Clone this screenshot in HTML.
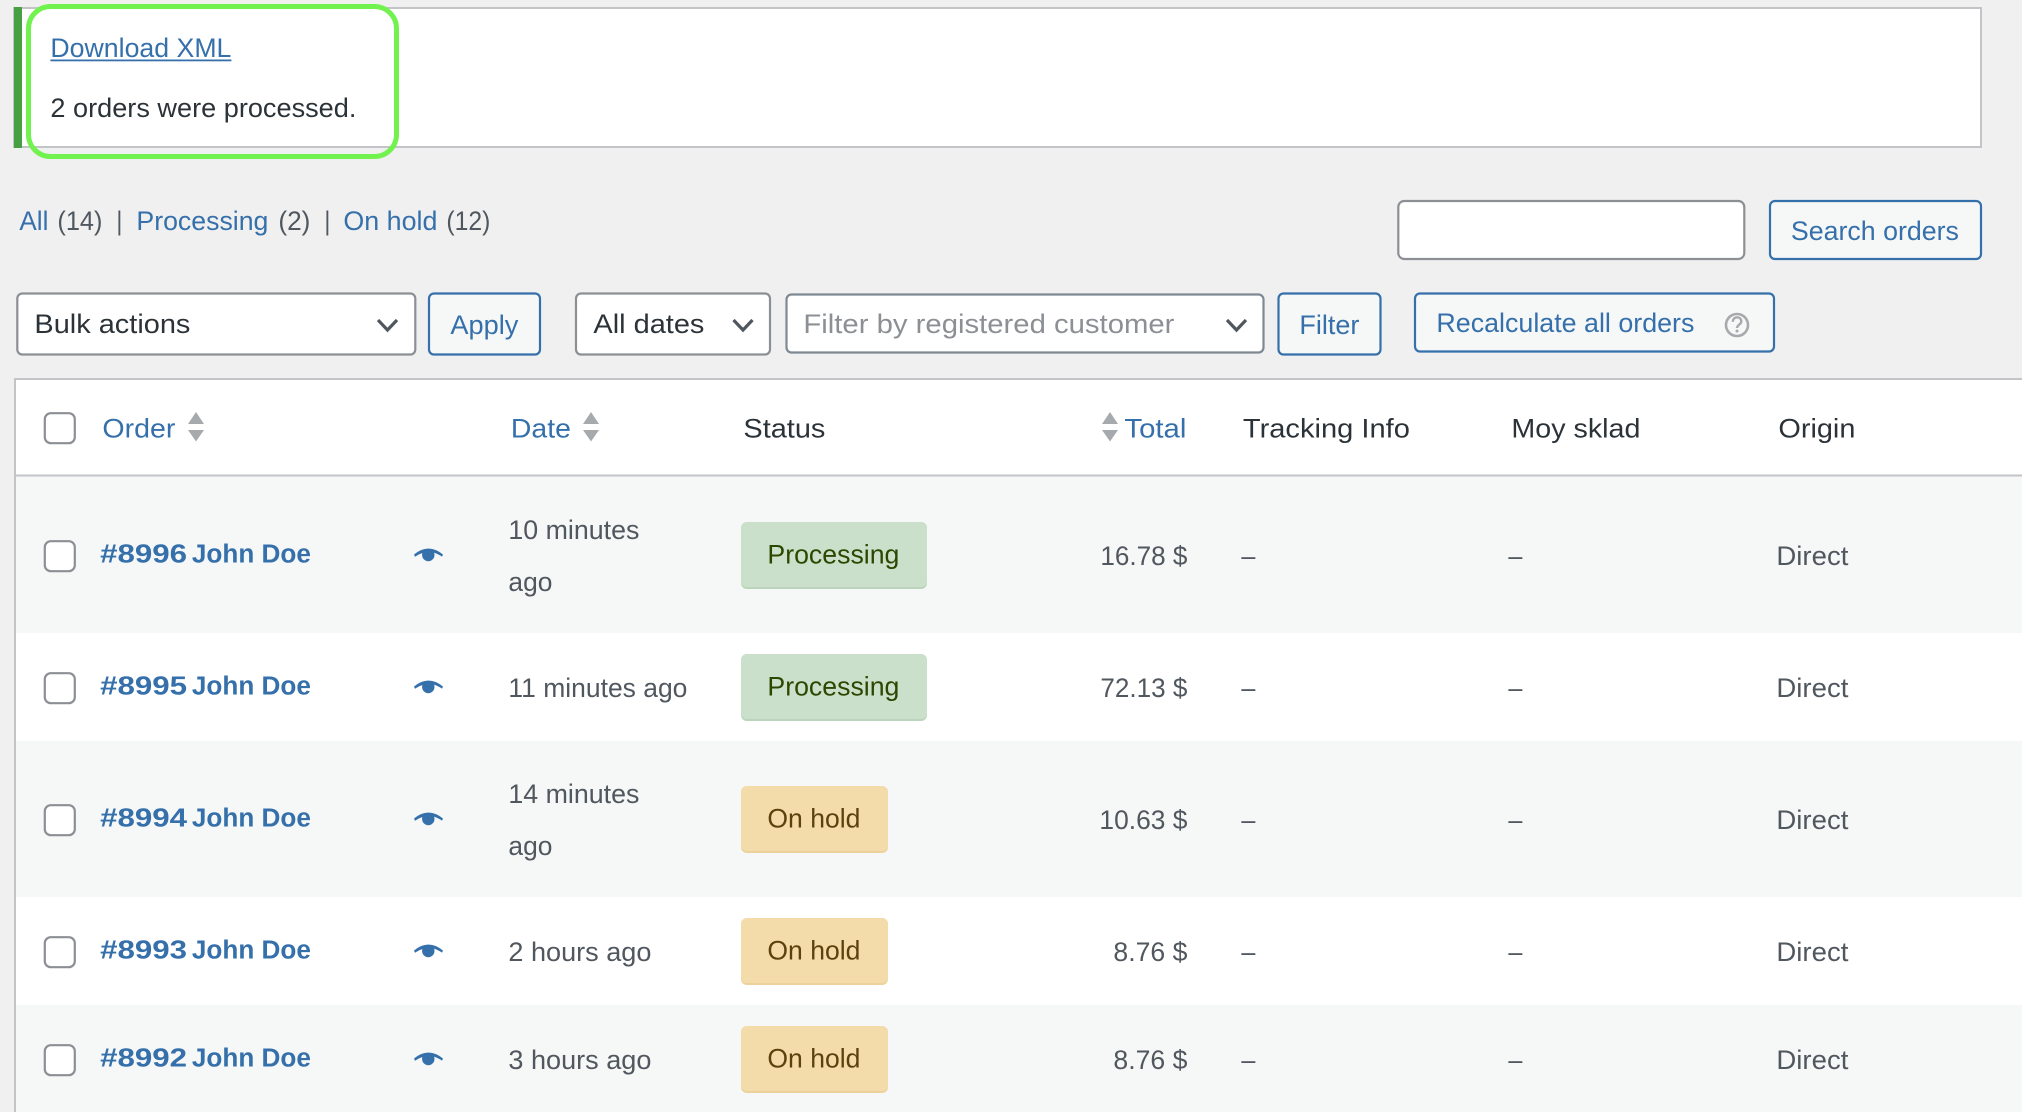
<!DOCTYPE html>
<html lang="en">
<head>
<meta charset="utf-8">
<title>Orders</title>
<style>
html,body{margin:0;padding:0;background:#f0f0f1;width:2022px;height:1112px;overflow:hidden}
svg{display:block;position:absolute;left:0;top:0}
text{font-family:"Liberation Sans",sans-serif;font-size:26.6px;fill:#3c434a;transform:translateX(-.6px)}
.l{fill:#3570ab}
.d{fill:#2c3338}
.g{fill:#50575e;transform:translate(-.6px,.8px)}
.b{fill:#3570ab;font-weight:bold;font-size:25.5px}
.p{fill:#2c4700}
.h{fill:#5b410c}
.s{fill:#a7aaad}
.box{fill:#fff;stroke:#8c8f94;stroke-width:2.2}
.btn{fill:#f6f7f7;stroke:#3570ab;stroke-width:2.2}
.chev{fill:none;stroke:#50575e;stroke-width:3.2}
</style>
</head>
<body>
<svg width="2022" height="1112" viewBox="0 0 2022 1112" xmlns="http://www.w3.org/2000/svg">
<defs>
<g id="eye"><path d="M414 554.6C423 546.6 434 546.6 443 554.6L442 556.6C437 553.6 434 552.6 433 552.4L422 553.2C420 553.8 418 554.8 415 556.8Z" fill="#3570ab"/><circle cx="428.3" cy="555" r="6.2" fill="#3570ab"/></g>
<g id="cb"><rect x="44.800" y="541.200" width="30" height="30" rx="6" fill="#fff" stroke="#8c8f94" stroke-width="2.2"/></g>
<g id="badgeP"><rect x="741" y="522" width="186" height="67" rx="6" fill="#bbd4bb"/><rect x="741" y="522" width="186" height="65" rx="6" fill="#cbe0cb"/></g>
<g id="badgeH"><rect x="741" y="522" width="147" height="67" rx="6" fill="#ecd29a"/><rect x="741" y="522" width="147" height="65" rx="6" fill="#f4dcaa"/></g>
<g id="up"><path d="M0 12L8 0L16 12Z" fill="#a7aaad"/><path d="M0 18H16L8 29.500Z" fill="#a7aaad"/></g>
</defs>

<!-- Notice -->
<rect x="14" y="8" width="1967" height="139" fill="#fff" stroke="#c3c4c7" stroke-width="2"/>
<rect x="14" y="7" width="8" height="141" fill="#46a03f"/>
<a><text class="l" x="51" y="57" textLength="181" lengthAdjust="spacingAndGlyphs">Download XML</text></a>
<rect x="50.400" y="59.500" width="181" height="1.800" fill="#3570ab"/>
<text class="d" x="51" y="117" textLength="306" lengthAdjust="spacingAndGlyphs">2 orders were processed.</text>
<rect x="28.500" y="6.500" width="368" height="150" rx="22" fill="none" stroke="#72f24f" stroke-width="5"/>

<!-- Status tabs -->
<text class="l" x="20" y="230" textLength="29" lengthAdjust="spacingAndGlyphs">All</text>
<text class="g" x="58" y="229.200" textLength="45" lengthAdjust="spacingAndGlyphs">(14)</text>
<text class="g" x="117" y="229.200" textLength="6" lengthAdjust="spacingAndGlyphs">|</text>
<text class="l" x="137" y="230" textLength="132" lengthAdjust="spacingAndGlyphs">Processing</text>
<text class="g" x="279" y="229.200" textLength="32" lengthAdjust="spacingAndGlyphs">(2)</text>
<text class="g" x="325" y="229.200" textLength="6" lengthAdjust="spacingAndGlyphs">|</text>
<text class="l" x="344" y="230" textLength="94" lengthAdjust="spacingAndGlyphs">On hold</text>
<text class="g" x="447" y="229.200" textLength="44" lengthAdjust="spacingAndGlyphs">(12)</text>

<!-- Search -->
<rect class="box" x="1398.300" y="201" width="346" height="58" rx="6"/>
<rect class="btn" x="1770" y="201" width="211" height="58" rx="5"/>
<text class="l" x="1791.500" y="240" textLength="168" lengthAdjust="spacingAndGlyphs">Search orders</text>

<!-- Bulk bar -->
<rect class="box" x="17.300" y="293.500" width="398" height="61" rx="5"/>
<text class="d" x="35" y="333" textLength="156" lengthAdjust="spacingAndGlyphs">Bulk actions</text>
<path class="chev" d="M378 320L387.500 330L397 320"/>
<rect class="btn" x="429" y="293.500" width="111" height="61" rx="5"/>
<text class="l" x="451" y="334" textLength="68" lengthAdjust="spacingAndGlyphs">Apply</text>

<rect class="box" x="576" y="293.500" width="194" height="61" rx="5"/>
<text class="d" x="594" y="333" textLength="111" lengthAdjust="spacingAndGlyphs">All dates</text>
<path class="chev" d="M733.500 320L743 330L752.500 320"/>

<rect x="786.500" y="294.500" width="477" height="58" rx="5" fill="#fff" stroke="#7e8993" stroke-width="2.200"/>
<text style="fill:#8c8f94" x="804" y="333" textLength="371" lengthAdjust="spacingAndGlyphs">Filter by registered customer</text>
<path class="chev" d="M1227 320L1236.500 330L1246 320"/>

<rect class="btn" x="1278.500" y="293.500" width="102" height="61" rx="5"/>
<text class="l" x="1300" y="334" textLength="60" lengthAdjust="spacingAndGlyphs">Filter</text>

<rect class="btn" x="1415" y="293.500" width="359" height="58" rx="5"/>
<text class="l" x="1437" y="332" textLength="258" lengthAdjust="spacingAndGlyphs">Recalculate all orders</text>
<circle cx="1737" cy="325" r="11" fill="none" stroke="#a7aaad" stroke-width="2.600"/>
<path d="M1732.800 321.800C1733 315.800 1741.400 316 1741.300 321.400C1741.300 324.600 1737.100 324.600 1737.100 328" fill="none" stroke="#a7aaad" stroke-width="2.400"/>
<circle cx="1737" cy="331" r="1.500" fill="#a7aaad"/>

<!-- Table -->
<rect x="15" y="379" width="2010" height="740" fill="#fff" stroke="#c3c4c7" stroke-width="2"/>
<rect x="16" y="474.500" width="2006" height="2" fill="#c3c4c7"/>
<rect x="16" y="476.500" width="2006" height="156.500" fill="#f6f7f7"/>
<rect x="16" y="741" width="2006" height="156" fill="#f6f7f7"/>
<rect x="16" y="1005" width="2006" height="107" fill="#f6f7f7"/>

<!-- Header -->
<use href="#cb" y="-128"/>
<text class="l" x="103" y="437.500" textLength="73" lengthAdjust="spacingAndGlyphs">Order</text>
<use href="#up" x="188" y="412"/>
<text class="l" x="511.500" y="437.500" textLength="60" lengthAdjust="spacingAndGlyphs">Date</text>
<use href="#up" x="583" y="412"/>
<text class="d" x="744" y="437.500" textLength="82" lengthAdjust="spacingAndGlyphs">Status</text>
<use href="#up" x="1102" y="412"/>
<text class="l" x="1125" y="437.500" textLength="62" lengthAdjust="spacingAndGlyphs">Total</text>
<text class="d" x="1243.500" y="437.500" textLength="167" lengthAdjust="spacingAndGlyphs">Tracking Info</text>
<text class="d" x="1512" y="437.500" textLength="129" lengthAdjust="spacingAndGlyphs">Moy sklad</text>
<text class="d" x="1779" y="437.500" textLength="77" lengthAdjust="spacingAndGlyphs">Origin</text>

<!-- Row 1 -->
<use href="#cb"/>
<text class="b" x="100.700" y="562.700" textLength="87" lengthAdjust="spacingAndGlyphs">#8996</text>
<text class="b" x="192.500" y="562.700" textLength="119" lengthAdjust="spacingAndGlyphs">John Doe</text>
<use href="#eye"/>
<text class="g" x="509" y="538" textLength="131" lengthAdjust="spacingAndGlyphs">10 minutes</text>
<text class="g" x="509" y="590" textLength="44" lengthAdjust="spacingAndGlyphs">ago</text>
<use href="#badgeP"/>
<text class="p" x="768" y="563.500" textLength="132" lengthAdjust="spacingAndGlyphs">Processing</text>
<text class="g" x="1101" y="564" textLength="87" lengthAdjust="spacingAndGlyphs">16.78 $</text>
<text class="g" x="1242" y="564" textLength="14" lengthAdjust="spacingAndGlyphs">–</text>
<text class="g" x="1509" y="564" textLength="14" lengthAdjust="spacingAndGlyphs">–</text>
<text class="g" x="1777" y="564" textLength="72" lengthAdjust="spacingAndGlyphs">Direct</text>

<!-- Row 2 -->
<use href="#cb" y="132"/>
<text class="b" x="100.700" y="694.700" textLength="87" lengthAdjust="spacingAndGlyphs">#8995</text>
<text class="b" x="192.500" y="694.700" textLength="119" lengthAdjust="spacingAndGlyphs">John Doe</text>
<use href="#eye" y="132"/>
<text class="g" x="509" y="696" textLength="179" lengthAdjust="spacingAndGlyphs">11 minutes ago</text>
<use href="#badgeP" y="132"/>
<text class="p" x="768" y="695.500" textLength="132" lengthAdjust="spacingAndGlyphs">Processing</text>
<text class="g" x="1101" y="696" textLength="87" lengthAdjust="spacingAndGlyphs">72.13 $</text>
<text class="g" x="1242" y="696" textLength="14" lengthAdjust="spacingAndGlyphs">–</text>
<text class="g" x="1509" y="696" textLength="14" lengthAdjust="spacingAndGlyphs">–</text>
<text class="g" x="1777" y="696" textLength="72" lengthAdjust="spacingAndGlyphs">Direct</text>

<!-- Row 3 -->
<use href="#cb" y="264"/>
<text class="b" x="100.700" y="826.700" textLength="87" lengthAdjust="spacingAndGlyphs">#8994</text>
<text class="b" x="192.500" y="826.700" textLength="119" lengthAdjust="spacingAndGlyphs">John Doe</text>
<use href="#eye" y="264"/>
<text class="g" x="509" y="802" textLength="131" lengthAdjust="spacingAndGlyphs">14 minutes</text>
<text class="g" x="509" y="854" textLength="44" lengthAdjust="spacingAndGlyphs">ago</text>
<use href="#badgeH" y="264"/>
<text class="h" x="768" y="827.500" textLength="93" lengthAdjust="spacingAndGlyphs">On hold</text>
<text class="g" x="1100" y="828" textLength="88" lengthAdjust="spacingAndGlyphs">10.63 $</text>
<text class="g" x="1242" y="828" textLength="14" lengthAdjust="spacingAndGlyphs">–</text>
<text class="g" x="1509" y="828" textLength="14" lengthAdjust="spacingAndGlyphs">–</text>
<text class="g" x="1777" y="828" textLength="72" lengthAdjust="spacingAndGlyphs">Direct</text>

<!-- Row 4 -->
<use href="#cb" y="396"/>
<text class="b" x="100.700" y="958.700" textLength="87" lengthAdjust="spacingAndGlyphs">#8993</text>
<text class="b" x="192.500" y="958.700" textLength="119" lengthAdjust="spacingAndGlyphs">John Doe</text>
<use href="#eye" y="396"/>
<text class="g" x="509" y="960" textLength="143" lengthAdjust="spacingAndGlyphs">2 hours ago</text>
<use href="#badgeH" y="396"/>
<text class="h" x="768" y="959.500" textLength="93" lengthAdjust="spacingAndGlyphs">On hold</text>
<text class="g" x="1114" y="960" textLength="74" lengthAdjust="spacingAndGlyphs">8.76 $</text>
<text class="g" x="1242" y="960" textLength="14" lengthAdjust="spacingAndGlyphs">–</text>
<text class="g" x="1509" y="960" textLength="14" lengthAdjust="spacingAndGlyphs">–</text>
<text class="g" x="1777" y="960" textLength="72" lengthAdjust="spacingAndGlyphs">Direct</text>

<!-- Row 5 -->
<use href="#cb" y="504"/>
<text class="b" x="100.700" y="1066.700" textLength="87" lengthAdjust="spacingAndGlyphs">#8992</text>
<text class="b" x="192.500" y="1066.700" textLength="119" lengthAdjust="spacingAndGlyphs">John Doe</text>
<use href="#eye" y="504"/>
<text class="g" x="509" y="1068" textLength="143" lengthAdjust="spacingAndGlyphs">3 hours ago</text>
<use href="#badgeH" y="504"/>
<text class="h" x="768" y="1067.500" textLength="93" lengthAdjust="spacingAndGlyphs">On hold</text>
<text class="g" x="1114" y="1068" textLength="74" lengthAdjust="spacingAndGlyphs">8.76 $</text>
<text class="g" x="1242" y="1068" textLength="14" lengthAdjust="spacingAndGlyphs">–</text>
<text class="g" x="1509" y="1068" textLength="14" lengthAdjust="spacingAndGlyphs">–</text>
<text class="g" x="1777" y="1068" textLength="72" lengthAdjust="spacingAndGlyphs">Direct</text>
</svg>
</body>
</html>
